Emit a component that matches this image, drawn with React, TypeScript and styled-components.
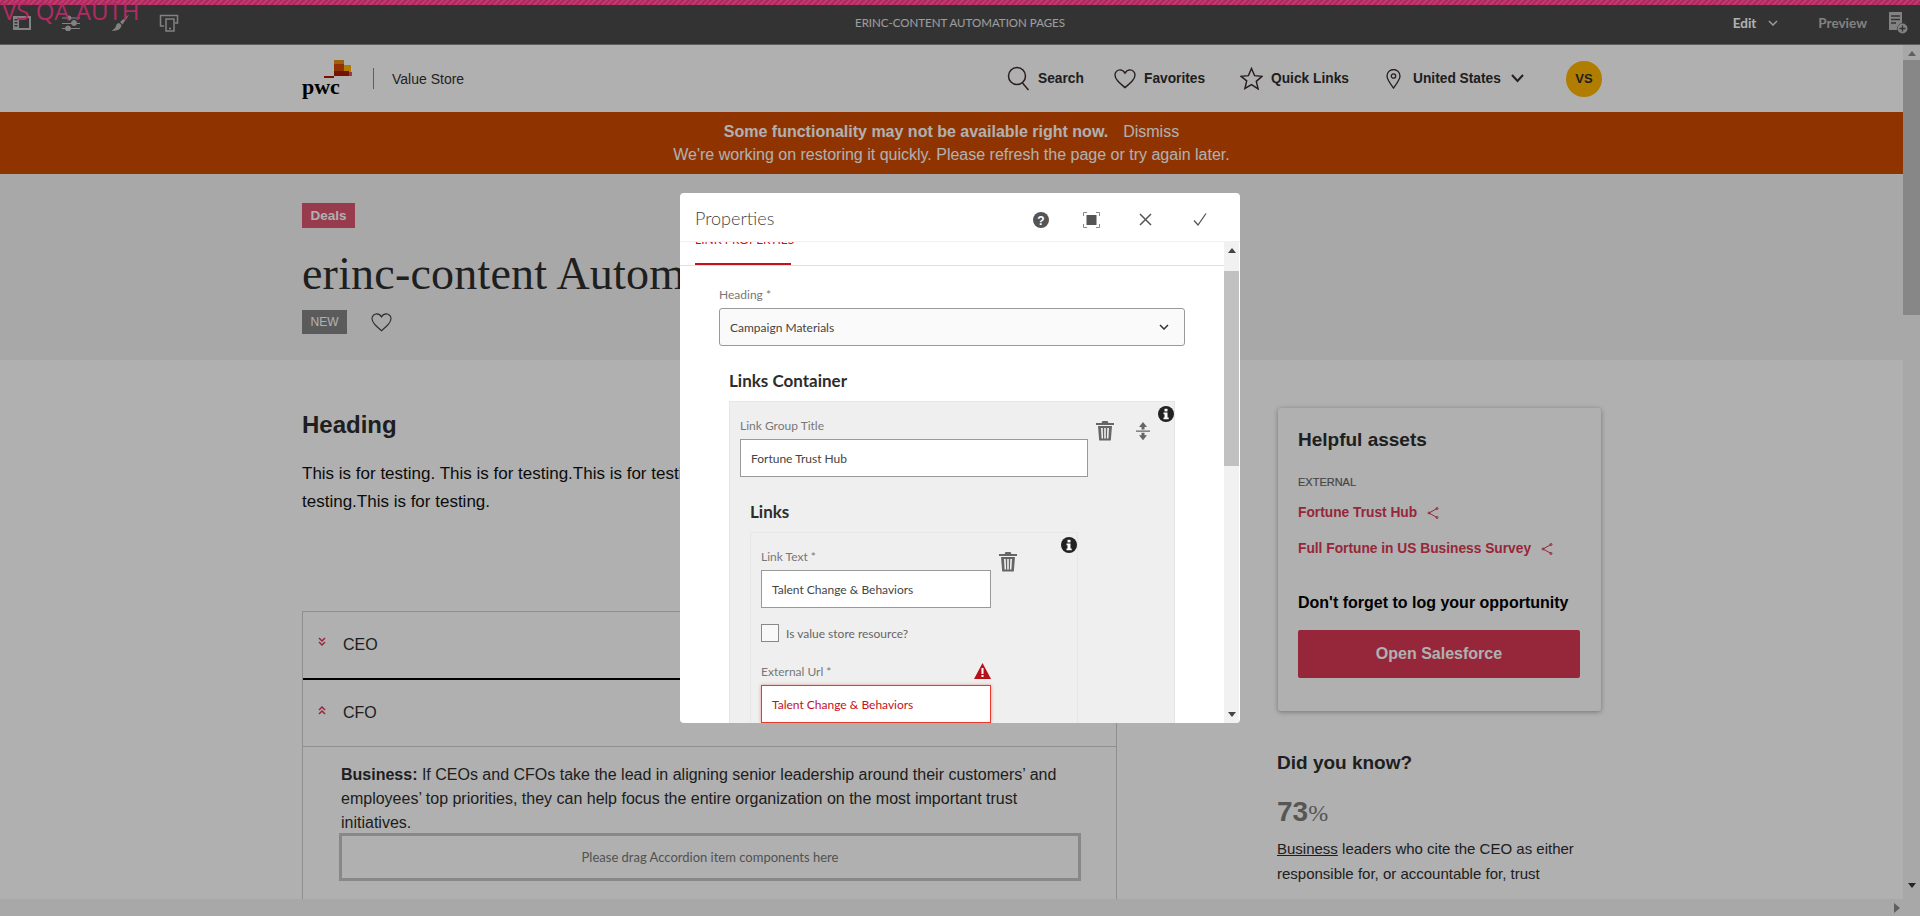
import styled, { createGlobalStyle } from "styled-components";

const sans = `"Liberation Sans", Arial, sans-serif`;
const clean = `Lato, "Open Sans", sans-serif`;

const GlobalStyle = createGlobalStyle`
  html, body {
    margin: 0;
    height: 100%;
    overflow: hidden;
    background: #fff;
  }
  * {
    box-sizing: border-box;
  }
`;

function App() {
  return (
    <Shell>
      <GlobalStyle />
      <Stripe />
      <EnvLabel>VS QA AUTH</EnvLabel>
      <Toolbar>
        <ToolIcons>
          <svg width="20" height="16" viewBox="0 0 20 16" fill="#bdbdbd">
            <path d="M1 1h18v14H1zM7 3v10h10V3zM2.500 4v1.500H5.500V4zm0 3v1.500H5.500V7zm0 3v1.500H5.500V10z" fillRule="evenodd" />
          </svg>
          <svg width="20" height="16" viewBox="0 0 20 16" stroke="#bdbdbd" fill="#bdbdbd" strokeWidth="1">
            <path d="M1 3h18M1 8.500h18M1 13.500h18" fill="none" />
            <circle cx="8" cy="3" r="2" />
            <circle cx="13" cy="8" r="2.500" />
            <circle cx="7" cy="13.500" r="2.500" />
          </svg>
          <svg width="20" height="18" viewBox="0 0 20 18" fill="#bdbdbd">
            <path d="M19 0.500 10 8l2.500 2.500zM9 9c-3 .5-2.500 3-4 5-.7 1-2 1.800-3.500 2.500 4 .8 8-.2 9.500-3.500.5-1 .5-1.700.2-2.300z" />
          </svg>
          <svg width="20" height="18" viewBox="0 0 20 18" fill="none" stroke="#bdbdbd" strokeWidth="1.500">
            <path d="M5 12H1.500V1.500H18.500V9H16" />
            <rect x="7" y="5" width="8" height="12" fill="#4b4b4b" />
            <path d="M10 14.500h2" />
          </svg>
        </ToolIcons>
        <ToolTitle>ERINC-CONTENT AUTOMATION PAGES</ToolTitle>
        <ToolRight>
          <ToolMode $active>Edit</ToolMode>
          <svg width="10" height="6" viewBox="0 0 10 6" fill="none" stroke="#e0e0e0" strokeWidth="1.500">
            <path d="M1 1l4 4 4-4" />
          </svg>
          <ToolMode>Preview</ToolMode>
          <svg width="20" height="22" viewBox="0 0 20 22" fill="#bdbdbd">
            <path d="M1 0h13v11a6 6 0 0 0-5 7H1z" />
            <path d="M3 4h9M3 7.500h9M3 11h5" stroke="#4b4b4b" strokeWidth="1.500" />
            <circle cx="14.500" cy="16.500" r="5" />
            <path d="M14.500 13.500v6M11.500 16.500h6" stroke="#4b4b4b" strokeWidth="1.300" />
          </svg>
        </ToolRight>
      </Toolbar>
      <Viewport>
        <PageColumn>
          <Page>
            <SiteHeader>
              <Container>
                <HeaderRow>
                  <Brand>
                    <Logo>
                      <svg width="28" height="18" viewBox="0 0 28 18">
                        <rect x="10" y="0" width="10" height="9" fill="#e88d14" />
                        <rect x="10" y="4" width="10" height="8" fill="#d04a02" />
                        <rect x="20" y="5" width="7" height="8" fill="#ffb600" />
                        <rect x="10" y="11" width="15" height="5" fill="#ad1b02" />
                        <rect x="25" y="12" width="3" height="4" fill="#db536a" />
                        <rect x="0" y="16" width="10" height="2" fill="#ad1b02" />
                      </svg>
                      <LogoWord>pwc</LogoWord>
                    </Logo>
                    <BrandDivider />
                    <BrandName>Value Store</BrandName>
                  </Brand>
                  <Nav>
                    <NavItem $width={107}>
                      <svg width="23" height="25" viewBox="0 0 23 25" fill="none" stroke="#3a2a2e" strokeWidth="1.500">
                        <circle cx="10" cy="10" r="8.500" />
                        <path d="M15.500 17l6 7" />
                      </svg>
                      Search
                    </NavItem>
                    <NavItem $width={126}>
                      <svg width="22" height="20" viewBox="0 0 24 22" fill="none" stroke="#3a2a2e" strokeWidth="1.500">
                        <path d="M12 20.500C5 14.500 1 11 1 6.500 1 3.500 3.500 1 6.500 1c2.300 0 4.300 1.300 5.500 3.500C13.200 2.300 15.200 1 17.500 1 20.500 1 23 3.500 23 6.500c0 4.500-4 8-11 14z" />
                      </svg>
                      Favorites
                    </NavItem>
                    <NavItem $width={146}>
                      <svg width="23" height="23" viewBox="0 0 24 24" fill="none" stroke="#3a2a2e" strokeWidth="1.500">
                        <path d="M12 1.500l3.200 7.500 7.800.7-6 5.300 1.900 7.900L12 18.300l-6.900 4.100L7 14.500 1 9.700l7.800-.7z" />
                      </svg>
                      Quick Links
                    </NavItem>
                    <NavItem $width={180}>
                      <svg width="15" height="20" viewBox="0 0 15 20" fill="none" stroke="#3a2a2e" strokeWidth="1.300">
                        <path d="M7.500 19C3.500 13.500 1 10.500 1 7a6.500 6.500 0 0 1 13 0c0 3.500-2.500 6.500-6.500 12z" />
                        <circle cx="7.500" cy="7" r="2.200" />
                      </svg>
                      <NavCountry>United States</NavCountry>
                      <NavChevron width="13" height="9" viewBox="0 0 13 9" fill="none" stroke="#3a2a2e" strokeWidth="2">
                        <path d="M1 1l5.500 6L12 1" />
                      </NavChevron>
                    </NavItem>
                    <Avatar>VS</Avatar>
                  </Nav>
                </HeaderRow>
              </Container>
            </SiteHeader>
            <Banner>
              <BannerLine>
                <strong>Some functionality may not be available right now.</strong>
                <Dismiss>Dismiss</Dismiss>
              </BannerLine>
              <BannerLine>We're working on restoring it quickly. Please refresh the page or try again later.</BannerLine>
            </Banner>
            <Hero>
              <Container>
                <Category>Deals</Category>
                <Title>erinc-content Automation Pages</Title>
                <TagRow>
                  <NewTag>NEW</NewTag>
                  <svg width="21" height="19" viewBox="0 0 24 22" fill="none" stroke="#444" strokeWidth="1.300">
                    <path d="M12 20.500C5 14.500 1 11 1 6.500 1 3.500 3.500 1 6.500 1c2.300 0 4.300 1.300 5.500 3.500C13.200 2.300 15.200 1 17.500 1 20.500 1 23 3.500 23 6.500c0 4.500-4 8-11 14z" />
                  </svg>
                </TagRow>
              </Container>
            </Hero>
            <Container>
              <MainRow>
                <LeftCol>
                  <Heading>Heading</Heading>
                  <Paragraph>
                    This is for testing. This is for testing.This is for testing.This is for testing.This is for testing.This is for
                    <br />
                    testing.This is for testing.
                  </Paragraph>
                  <Accordion>
                    <AccordionRow $dark>
                      <DoubleChevron $up={false} />
                      CEO
                    </AccordionRow>
                    <AccordionRow>
                      <DoubleChevron $up />
                      CFO
                    </AccordionRow>
                    <AccordionBody>
                      <BodyText>
                        <strong>Business:</strong> If CEOs and CFOs take the lead in aligning senior leadership around their customers’ and employees’ top priorities, they can help focus the entire organization on the most important trust initiatives.
                      </BodyText>
                      <DropZone>Please drag Accordion item components here</DropZone>
                    </AccordionBody>
                  </Accordion>
                </LeftCol>
                <RightCol>
                  <Card>
                    <CardTitle>Helpful assets</CardTitle>
                    <Eyebrow>EXTERNAL</Eyebrow>
                    <AssetLink>
                      Fortune Trust Hub
                      <ShareIcon />
                    </AssetLink>
                    <AssetLink>
                      Full Fortune in US Business Survey
                      <ShareIcon />
                    </AssetLink>
                    <Reminder>Don't forget to log your opportunity</Reminder>
                    <SalesforceButton>Open Salesforce</SalesforceButton>
                  </Card>
                  <KnowTitle>Did you know?</KnowTitle>
                  <Stat>
                    73<StatUnit>%</StatUnit>
                  </Stat>
                  <StatText>
                    <u>Business</u> leaders who cite the CEO as either responsible for, or accountable for, trust
                  </StatText>
                </RightCol>
              </MainRow>
            </Container>
          </Page>
          <HScroll>
            <svg width="6" height="10" viewBox="0 0 6 10" fill="#8a8a8a">
              <path d="M0 0l6 5-6 5z" />
            </svg>
          </HScroll>
        </PageColumn>
        <VScroll>
          <ScrollArrow viewBox="0 0 10 6" fill="#8a8a8a">
            <path d="M5 0l5 6H0z" />
          </ScrollArrow>
          <PageThumb />
          <ScrollArrow $pushed viewBox="0 0 10 6" fill="#333">
            <path d="M5 6L0 0h10z" />
          </ScrollArrow>
        </VScroll>
      </Viewport>
      <Overlay />
      <Modal>
        <ModalHeader>
          <ModalTitle>Properties</ModalTitle>
          <ModalActions>
            <svg width="16" height="16" viewBox="0 0 16 16">
              <circle cx="8" cy="8" r="8" fill="#555" />
              <text x="8" y="12.500" textAnchor="middle" fontSize="12" fontWeight="700" fontFamily="Liberation Sans" fill="#fff">?</text>
            </svg>
            <svg width="17" height="16" viewBox="0 0 17 16" fill="none" stroke="#888">
              <path d="M4 .5H.5V4M13 .5h3.500V4M4 15.500H.5V12M13 15.500h3.500V12" />
              <rect x="3.500" y="3" width="10" height="10" fill="#555" stroke="none" />
            </svg>
            <svg width="13" height="13" viewBox="0 0 13 13" stroke="#555" strokeWidth="1.500">
              <path d="M1 1l11 11M12 1L1 12" />
            </svg>
            <svg width="14" height="13" viewBox="0 0 14 13" fill="none" stroke="#555" strokeWidth="1.300">
              <path d="M1 7.500l4 4.500 8-11.500" />
            </svg>
          </ModalActions>
        </ModalHeader>
        <ModalBody>
          <FormScroll>
            <TabBar>
              <Tab>LINK PROPERTIES</Tab>
            </TabBar>
            <Form>
              <FieldLabel>Heading *</FieldLabel>
              <Select>
                Campaign Materials
                <svg width="10" height="6" viewBox="0 0 10 6" fill="none" stroke="#333" strokeWidth="1.500">
                  <path d="M1 1l4 4 4-4" />
                </svg>
              </Select>
              <SectionTitle>Links Container</SectionTitle>
              <Panel $width={446}>
                <InfoIcon />
                <FieldRow>
                  <FieldColumn $width={348}>
                    <FieldLabel>Link Group Title</FieldLabel>
                    <TextInput>Fortune Trust Hub</TextInput>
                  </FieldColumn>
                  <RowTools>
                    <TrashIcon />
                    <svg width="14" height="20" viewBox="0 0 14 20" fill="#666">
                      <path d="M7 1l4 5H8.500v2.500h-3V6H3zM0 9.500h14v1.300H0zM5.500 11.800h3v2.500H11L7 19.300l-4-5h2.500z" />
                    </svg>
                  </RowTools>
                </FieldRow>
                <SectionTitle>Links</SectionTitle>
                <Panel $width={328}>
                  <InfoIcon />
                  <FieldRow>
                    <FieldColumn $width={230}>
                      <FieldLabel>Link Text *</FieldLabel>
                      <TextInput>Talent Change &amp; Behaviors</TextInput>
                    </FieldColumn>
                    <RowTools>
                      <TrashIcon />
                    </RowTools>
                  </FieldRow>
                  <CheckRow>
                    <CheckBox />
                    Is value store resource?
                  </CheckRow>
                  <FieldColumn $width={230}>
                    <ErrorLabelRow>
                      <FieldLabel>External Url *</FieldLabel>
                      <svg width="17" height="16" viewBox="0 0 17 16">
                        <path d="M8.500 0L17 16H0z" fill="#b8101a" />
                        <rect x="7.500" y="5" width="2" height="6" fill="#fff" />
                        <rect x="7.500" y="12" width="2" height="2" fill="#fff" />
                      </svg>
                    </ErrorLabelRow>
                    <TextInput $invalid>Talent Change &amp; Behaviors</TextInput>
                  </FieldColumn>
                </Panel>
              </Panel>
            </Form>
          </FormScroll>
          <ModalScrollbar>
            <ScrollArrow viewBox="0 0 10 6" fill="#444">
              <path d="M5 0l5 6H0z" />
            </ScrollArrow>
            <ModalThumb />
            <ScrollArrow $pushed viewBox="0 0 10 6" fill="#444">
              <path d="M5 6L0 0h10z" />
            </ScrollArrow>
          </ModalScrollbar>
        </ModalBody>
      </Modal>
    </Shell>
  );
}

function ShareIcon() {
  return (
    <ShareSvg width="12" height="12" viewBox="0 0 12 12" fill="none" stroke="#d93954" strokeWidth="1">
      <path d="M10 1.500L2 6l8 4.500" />
      <circle cx="10" cy="1.500" r="1" />
      <circle cx="2" cy="6" r="1" />
      <circle cx="10" cy="10.500" r="1" />
    </ShareSvg>
  );
}

function TrashIcon() {
  return (
    <svg width="18" height="20" viewBox="0 0 18 20" fill="#666">
      <path d="M6.500 0h5l1 2H18v2H0V2h5.500zM2 5h14l-1.200 14.500H3.200zM5 7l.6 10.500h1.500L6.700 7zm3.200 0v10.500h1.600V7zm3.100 0l-.4 10.500h1.500L13 7z" fillRule="evenodd" />
    </svg>
  );
}

function InfoIcon() {
  return (
    <InfoBadge width="16" height="16" viewBox="0 0 16 16">
      <circle cx="8" cy="8" r="8" fill="#222" />
      <rect x="6.500" y="2.800" width="3" height="2.600" fill="#fff" />
      <path d="M5.500 6.500h4v5h1.200v1.800H5.500v-1.800h1v-3.200h-1z" fill="#fff" />
    </InfoBadge>
  );
}

const Shell = styled.div`
  position: relative;
  width: 100%;
  height: 916px;
  display: flex;
  flex-direction: column;
  overflow: hidden;
  font-family: ${sans};
`;

const Stripe = styled.div`
  position: relative;
  z-index: 5;
  height: 5px;
  flex: none;
  background: repeating-linear-gradient(135deg, #c2386f 0 2px, #a82c5e 2px 4px);
`;

const EnvLabel = styled.div`
  position: absolute;
  z-index: 6;
  left: 2px;
  top: -3px;
  font-family: "Open Sans", sans-serif;
  font-size: 24px;
  line-height: 28px;
  color: #b42a66;
`;

const Toolbar = styled.div`
  height: 40px;
  flex: none;
  padding-bottom: 4px;
  display: grid;
  grid-template-columns: 1fr auto 1fr;
  align-items: center;
  background: #4b4b4b;
  border-bottom: 1px solid #8a8a8a;
`;

const ToolIcons = styled.div`
  display: flex;
  align-items: center;
  gap: 29px;
  padding-left: 12px;
`;

const ToolTitle = styled.div`
  font-family: ${clean};
  font-size: 11.5px;
  color: #e4e4e4;
`;

const ToolRight = styled.div`
  display: flex;
  align-items: center;
  justify-content: flex-end;
  gap: 9px;
  padding-right: 12px;
  svg:last-child {
    margin-left: 12px;
  }
`;

const ToolMode = styled.span<{ $active?: boolean }>`
  font-family: ${clean};
  font-size: 13.5px;
  font-weight: 700;
  color: ${(props) => (props.$active ? "#fff" : "#bdbdbd")};
  margin: ${(props) => (props.$active ? "0 3px 0 0" : "0 0 0 31px")};
`;

const Viewport = styled.div`
  flex: 1;
  min-height: 0;
  display: flex;
`;

const PageColumn = styled.div`
  flex: 1;
  min-width: 0;
  display: flex;
  flex-direction: column;
`;

const Page = styled.div`
  flex: 1;
  min-height: 0;
  overflow: hidden;
  background: #fff;
`;

const Container = styled.div`
  width: 1300px;
  margin-left: 302px;
`;

const SiteHeader = styled.header`
  height: 67px;
`;

const HeaderRow = styled.div`
  height: 67px;
  display: flex;
  align-items: center;
  justify-content: space-between;
`;

const Brand = styled.div`
  display: flex;
  align-items: center;
`;

const Logo = styled.div`
  width: 50px;
  display: flex;
  flex-direction: column;
  align-items: flex-end;
  svg {
    display: block;
  }
`;

const LogoWord = styled.div`
  width: 100%;
  margin-top: -2px;
  font-family: "Liberation Serif", serif;
  font-size: 22px;
  line-height: 22px;
  font-weight: 700;
  color: #000;
`;

const BrandDivider = styled.div`
  width: 1px;
  height: 21px;
  margin: 0 18px 0 21px;
  background: #888;
`;

const BrandName = styled.div`
  font-size: 14px;
  color: #333;
`;

const Nav = styled.nav`
  display: flex;
  align-items: center;
`;

const NavItem = styled.div<{ $width: number }>`
  width: ${(props) => props.$width}px;
  display: flex;
  align-items: center;
  gap: 8px;
  font-size: 13.75px;
  font-weight: 700;
  color: #2d2d2d;
`;

const NavCountry = styled.span`
  margin-left: 4px;
`;

const NavChevron = styled.svg`
  margin-left: 2px;
`;

const Avatar = styled.div`
  width: 36px;
  height: 36px;
  border-radius: 50%;
  display: flex;
  align-items: center;
  justify-content: center;
  font-size: 13px;
  font-weight: 700;
  color: #2d2d2d;
  background: #ffb600;
`;

const Banner = styled.div`
  height: 62px;
  display: flex;
  flex-direction: column;
  justify-content: center;
  gap: 1px;
  background: #d04a02;
  color: #fff;
  text-align: center;
  font-size: 16px;
`;

const BannerLine = styled.div`
  line-height: 22px;
`;

const Dismiss = styled.span`
  margin-left: 15px;
`;

const Hero = styled.div`
  height: 186px;
  padding-top: 29px;
  background: #f3f3f3;
`;

const Category = styled.div`
  width: 53px;
  height: 25px;
  display: flex;
  align-items: center;
  justify-content: center;
  background: #dd5670;
  color: #fff;
  font-size: 13.5px;
  font-weight: 700;
`;

const Title = styled.h1`
  margin: 21px 0 0;
  font-family: "Liberation Serif", serif;
  font-size: 46px;
  line-height: 50px;
  font-weight: 400;
  letter-spacing: 0.2px;
  color: #2d2d2d;
  white-space: nowrap;
`;

const TagRow = styled.div`
  margin-top: 11px;
  display: flex;
  align-items: center;
  gap: 24px;
`;

const NewTag = styled.div`
  width: 45px;
  height: 24px;
  display: flex;
  align-items: center;
  justify-content: center;
  background: #858585;
  color: #fff;
  font-size: 12px;
`;

const MainRow = styled.div`
  display: flex;
  align-items: flex-start;
`;

const LeftCol = styled.div`
  width: 815px;
  padding-top: 49px;
`;

const Heading = styled.h2`
  margin: 0;
  font-size: 24px;
  line-height: 32px;
  font-weight: 700;
  color: #2d2d2d;
`;

const Paragraph = styled.p`
  margin: 19px 0 0;
  font-size: 17px;
  line-height: 28px;
  color: #111;
  white-space: nowrap;
`;

const Accordion = styled.div`
  margin-top: 95px;
  border: solid #d0d0d0;
  border-width: 1px 1px 0;
  color: #2d2d2d;
`;

const AccordionRow = styled.div<{ $dark?: boolean }>`
  height: ${(props) => (props.$dark ? 68 : 67)}px;
  display: flex;
  align-items: center;
  padding-left: 15px;
  font-size: 16px;
  border-bottom: ${(props) => (props.$dark ? "2px solid #000" : "1px solid #d0d0d0")};
`;

const DoubleChevron = styled.span<{ $up: boolean }>`
  width: 8px;
  height: 10px;
  margin: -6px 17px 0 0;
  flex: none;
  background: no-repeat center / 8px 10px
    url("data:image/svg+xml,%3Csvg xmlns='http://www.w3.org/2000/svg' viewBox='0 0 8 10' fill='none' stroke='%23d93954' stroke-width='1.500'%3E%3Cpath d='M1 1l3 3 3-3M1 5l3 3 3-3'/%3E%3C/svg%3E");
  transform: ${(props) => (props.$up ? "rotate(180deg)" : "none")};
`;

const AccordionBody = styled.div`
  padding: 16px 0 60px 38px;
`;

const BodyText = styled.p`
  width: 740px;
  margin: 0;
  font-size: 16px;
  line-height: 24px;
  color: #2d2d2d;
`;

const DropZone = styled.div`
  width: 742px;
  height: 48px;
  margin: -2px 0 0 -2px;
  display: flex;
  align-items: center;
  justify-content: center;
  border: 3px solid #c5c5c5;
  font-family: ${clean};
  font-size: 13px;
  color: #777;
`;

const RightCol = styled.div`
  width: 325px;
  margin-left: 160px;
  padding-top: 48px;
`;

const Card = styled.div`
  width: 323px;
  height: 303px;
  margin-left: 1px;
  padding: 20px;
  border-radius: 3px;
  box-shadow: 0 1px 5px rgba(0, 0, 0, 0.35);
`;

const CardTitle = styled.h3`
  margin: 0;
  font-size: 19px;
  line-height: 24px;
  font-weight: 700;
  color: #2d2d2d;
`;

const Eyebrow = styled.div`
  margin-top: 23px;
  font-size: 11px;
  line-height: 14px;
  color: #666;
  -webkit-text-stroke: 0.2px #666;
`;

const AssetLink = styled.div`
  margin-top: 15px;
  display: flex;
  align-items: center;
  font-size: 13.75px;
  line-height: 18px;
  font-weight: 700;
  color: #d93954;
  & + & {
    margin-top: 18px;
  }
`;

const ShareSvg = styled.svg`
  margin-left: 10px;
`;

const Reminder = styled.div`
  margin-top: 35px;
  font-size: 16px;
  line-height: 20px;
  font-weight: 700;
  color: #000;
`;

const SalesforceButton = styled.div`
  width: 282px;
  height: 48px;
  margin-top: 17px;
  display: flex;
  align-items: center;
  justify-content: center;
  border-radius: 2px;
  background: #d93954;
  color: #fff;
  font-size: 16px;
  font-weight: 700;
`;

const KnowTitle = styled.h3`
  margin: 40px 0 0;
  font-size: 19px;
  line-height: 24px;
  font-weight: 700;
  color: #2d2d2d;
`;

const Stat = styled.div`
  margin-top: 20px;
  font-size: 28px;
  line-height: 34px;
  font-weight: 700;
  color: #7d7d7d;
`;

const StatUnit = styled.span`
  font-family: "Liberation Serif", serif;
  font-size: 24px;
  font-weight: 400;
`;

const StatText = styled.p`
  width: 310px;
  margin: 6px 0 0;
  font-size: 15px;
  line-height: 25px;
  color: #2d2d2d;
`;

const HScroll = styled.div`
  height: 17px;
  flex: none;
  display: flex;
  align-items: center;
  justify-content: flex-end;
  padding-right: 3px;
  background: #f3f3f3;
`;

const VScroll = styled.div`
  width: 17px;
  flex: none;
  display: flex;
  flex-direction: column;
  align-items: center;
  padding-bottom: 22px;
  background: #f3f3f3;
`;

const ScrollArrow = styled.svg<{ $pushed?: boolean }>`
  width: 8px;
  height: 5px;
  flex: none;
  margin-top: ${(props) => (props.$pushed ? "auto" : "6px")};
  margin-bottom: ${(props) => (props.$pushed ? "6px" : 0)};
`;

const PageThumb = styled.div`
  width: 100%;
  height: 255px;
  margin-top: 4px;
  background: #c4c4c4;
`;

const Overlay = styled.div`
  position: absolute;
  inset: 0;
  z-index: 2;
  background: rgba(0, 0, 0, 0.31);
`;

const Modal = styled.div`
  position: absolute;
  z-index: 3;
  left: 680px;
  top: 193px;
  width: 560px;
  height: 530px;
  display: flex;
  flex-direction: column;
  overflow: hidden;
  border-radius: 4px;
  background: #fff;
  font-family: ${clean};
`;

const ModalHeader = styled.div`
  height: 49px;
  flex: none;
  display: flex;
  align-items: center;
  justify-content: space-between;
  padding: 3px 14px 0 15px;
  border-bottom: 1px solid #f0f0f0;
`;

const ModalTitle = styled.div`
  margin-top: -2px;
  font-size: 18px;
  font-weight: 300;
  color: #444;
`;

const ModalActions = styled.div`
  margin-top: 2px;
  display: grid;
  grid-template-columns: 50px 50px 58px 52px;
  justify-items: center;
  align-items: center;
`;

const ModalBody = styled.div`
  flex: 1;
  min-height: 0;
  display: flex;
`;

const FormScroll = styled.div`
  width: 544px;
  overflow: hidden;
`;

const TabBar = styled.div`
  height: 24px;
  padding-left: 15px;
  overflow: hidden;
  border-bottom: 1px solid #e1e1e1;
`;

const Tab = styled.div`
  width: 96px;
  height: 26px;
  margin-top: -2px;
  font-size: 12px;
  line-height: 0;
  white-space: nowrap;
  color: #c5101a;
  border-bottom: 3px solid #c5101a;
`;

const Form = styled.div`
  padding: 21px 39px 0;
`;

const FieldLabel = styled.div`
  height: 16px;
  margin-bottom: 5px;
  font-size: 12px;
  line-height: 16px;
  color: #777;
`;

const Select = styled.div`
  height: 38px;
  display: flex;
  align-items: center;
  justify-content: space-between;
  padding: 0 15px 0 10px;
  border: 1px solid #999;
  border-radius: 3px;
  background: #fafafa;
  font-size: 12px;
  color: #444;
`;

const SectionTitle = styled.div`
  margin: 23px 0 8px 10px;
  font-size: 17px;
  line-height: 24px;
  font-weight: 700;
  color: #2c2c2c;
`;

const Panel = styled.div<{ $width: number }>`
  position: relative;
  width: ${(props) => props.$width}px;
  margin-left: 10px;
  padding: 16px 0 0 10px;
  border: 1px solid #e6e6e6;
  border-bottom: 0;
  background: #efefef;
`;

const InfoBadge = styled.svg`
  position: absolute;
  top: 4px;
  right: 0;
`;

const FieldRow = styled.div`
  display: flex;
  align-items: flex-start;
`;

const FieldColumn = styled.div<{ $width: number }>`
  width: ${(props) => props.$width}px;
`;

const RowTools = styled.div`
  display: flex;
  align-items: flex-start;
  gap: 22px;
  margin: 3px 0 0 8px;
`;

const TextInput = styled.div<{ $invalid?: boolean }>`
  height: 38px;
  display: flex;
  align-items: center;
  padding-left: 10px;
  background: #fff;
  font-size: 12px;
  color: ${(props) => (props.$invalid ? "#c5101a" : "#444")};
  border: 1px solid ${(props) => (props.$invalid ? "#e8392b" : "#999")};
  box-shadow: ${(props) => (props.$invalid ? "0 0 3px rgba(232, 57, 43, 0.5)" : "none")};
`;

const CheckRow = styled.div`
  margin-top: 16px;
  display: flex;
  align-items: center;
  gap: 7px;
  font-size: 12px;
  color: #666;
`;

const CheckBox = styled.div`
  width: 18px;
  height: 18px;
  border: 1px solid #888;
  background: #f8f8f8;
`;

const ErrorLabelRow = styled.div`
  margin-top: 22px;
  height: 21px;
  display: flex;
  justify-content: space-between;
  align-items: flex-start;
  svg {
    margin-top: -1px;
  }
`;

const ModalScrollbar = styled.div`
  width: 15px;
  flex: none;
  display: flex;
  flex-direction: column;
  align-items: center;
  background: #f1f1f1;
`;

const ModalThumb = styled.div`
  width: 100%;
  height: 195px;
  margin-top: 18px;
  background: #c1c1c1;
`;

export default App;
